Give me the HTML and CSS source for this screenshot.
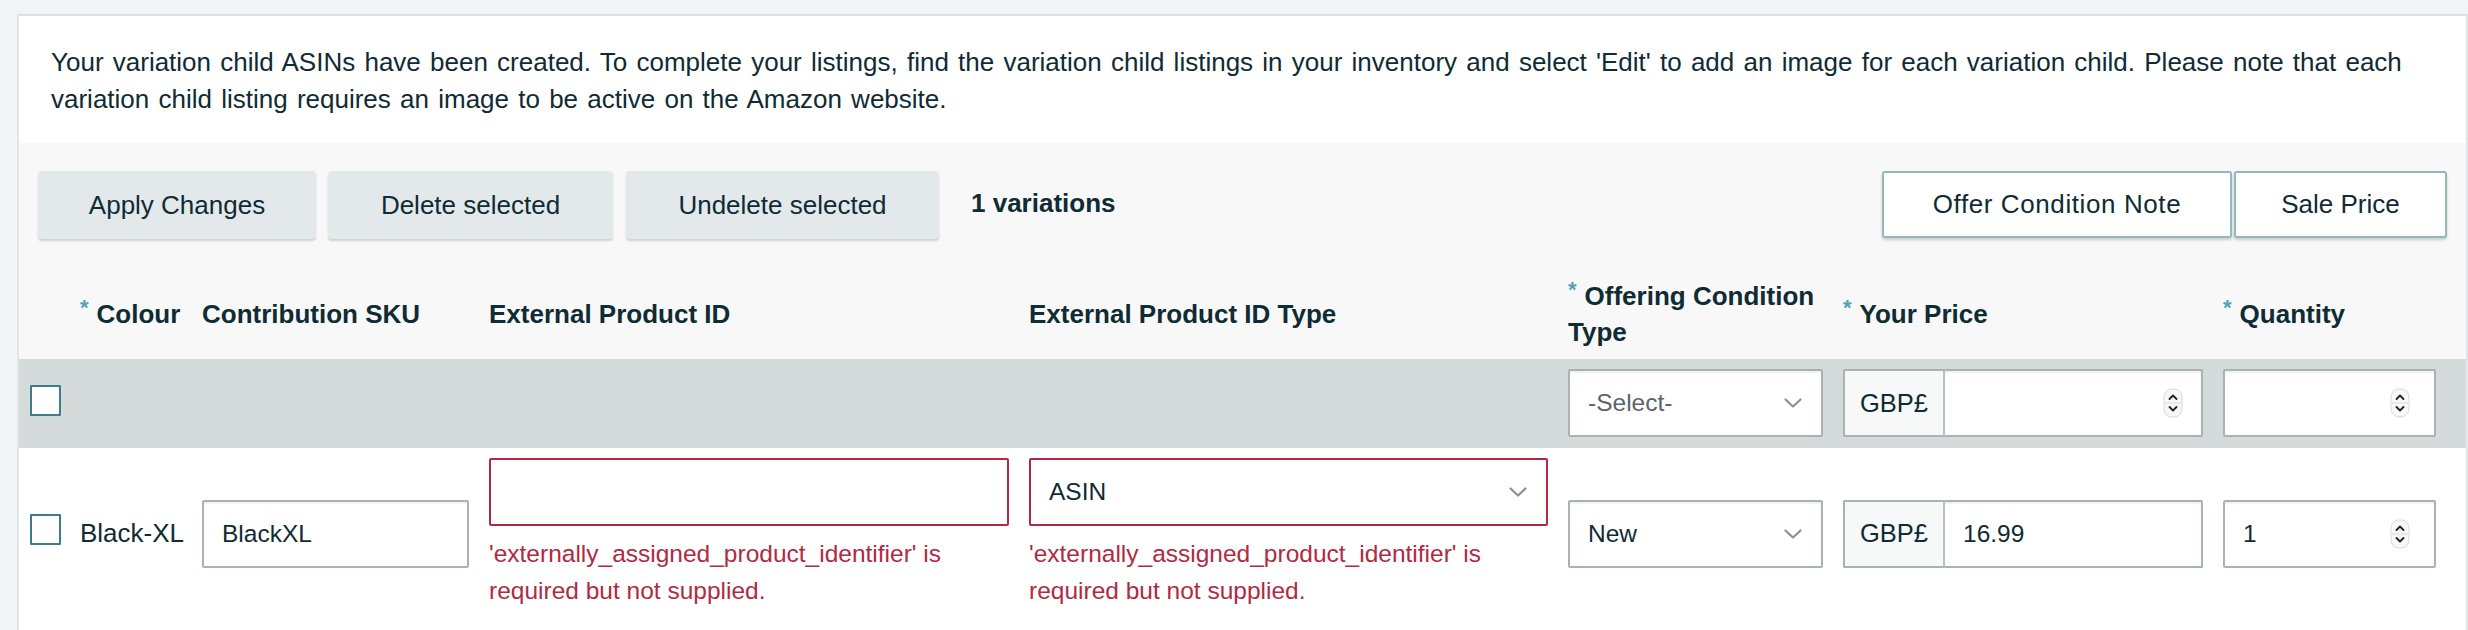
FILE: index.html
```html
<!DOCTYPE html>
<html lang="en">
<head>
<meta charset="utf-8">
<title>Variations</title>
<link rel="stylesheet" href="styles.css">
</head>
<body>
<div class="page">
  <div class="panel">
    <div class="notice">
      <p>Your variation child ASINs have been created. To complete your listings, find the variation child listings in your inventory and select 'Edit' to add an image for each variation child. Please note that each variation child listing requires an image to be active on the Amazon website.</p>
    </div>

    <div class="toolbar">
      <div class="actions">
        <button class="btn btn-apply">Apply Changes</button>
        <button class="btn btn-delete">Delete selected</button>
        <button class="btn btn-undelete">Undelete selected</button>
        <span class="count">1 variations</span>
      </div>
      <div class="toggles">
        <button class="toggle toggle-note">Offer Condition Note</button>
        <button class="toggle toggle-sale">Sale Price</button>
      </div>
    </div>

    <div class="grid head">
      <div></div>
      <div class="th"><span class="req">*</span>Colour</div>
      <div class="th">Contribution SKU</div>
      <div class="th">External Product ID</div>
      <div class="th">External Product ID Type</div>
      <div class="th"><span class="req">*</span>Offering Condition Type</div>
      <div class="th"><span class="req">*</span>Your Price</div>
      <div class="th"><span class="req">*</span>Quantity</div>
    </div>

    <div class="grid bulk">
      <div><span class="check"></span></div>
      <div></div>
      <div></div>
      <div></div>
      <div></div>
      <div class="field select placeholder">-Select-<svg class="chev" width="20" height="12" viewBox="0 0 20 12"><path d="M2.5 2.5 L10 9.5 L17.5 2.5" fill="none" stroke="#8d9191" stroke-width="2.2" stroke-linecap="round" stroke-linejoin="round"/></svg></div>
      <div class="money">
        <span class="prefix">GBP£</span>
        <span class="field num"><span class="val"></span><svg class="spin" width="20" height="30" viewBox="0 0 20 30"><rect x="1" y="1" width="18" height="28" rx="8" fill="#f7f7f7" stroke="#dadada"/><line x1="2" y1="15" x2="18" y2="15" stroke="#dcdcdc"/><path d="M6.5 11 L10 7.5 L13.5 11" fill="none" stroke="#222" stroke-width="1.8" stroke-linecap="round" stroke-linejoin="round"/><path d="M6.5 19 L10 22.5 L13.5 19" fill="none" stroke="#222" stroke-width="1.8" stroke-linecap="round" stroke-linejoin="round"/></svg></span>
      </div>
      <div class="field num"><span class="val"></span><svg class="spin" width="20" height="30" viewBox="0 0 20 30"><rect x="1" y="1" width="18" height="28" rx="8" fill="#f7f7f7" stroke="#dadada"/><line x1="2" y1="15" x2="18" y2="15" stroke="#dcdcdc"/><path d="M6.5 11 L10 7.5 L13.5 11" fill="none" stroke="#222" stroke-width="1.8" stroke-linecap="round" stroke-linejoin="round"/><path d="M6.5 19 L10 22.5 L13.5 19" fill="none" stroke="#222" stroke-width="1.8" stroke-linecap="round" stroke-linejoin="round"/></svg></div>
    </div>

    <div class="grid row">
      <div><span class="check"></span></div>
      <div class="cell-text">Black-XL</div>
      <div class="field">BlackXL</div>
      <div class="stack">
        <div class="field error"></div>
        <div class="err-msg">'externally_assigned_product_identifier' is required but not supplied.</div>
      </div>
      <div class="stack">
        <div class="field select error">ASIN<svg class="chev" width="20" height="12" viewBox="0 0 20 12"><path d="M2.5 2.5 L10 9.5 L17.5 2.5" fill="none" stroke="#8d9191" stroke-width="2.2" stroke-linecap="round" stroke-linejoin="round"/></svg></div>
        <div class="err-msg">'externally_assigned_product_identifier' is required but not supplied.</div>
      </div>
      <div class="field select">New<svg class="chev" width="20" height="12" viewBox="0 0 20 12"><path d="M2.5 2.5 L10 9.5 L17.5 2.5" fill="none" stroke="#8d9191" stroke-width="2.2" stroke-linecap="round" stroke-linejoin="round"/></svg></div>
      <div class="money">
        <span class="prefix">GBP£</span>
        <span class="field num"><span class="val">16.99</span></span>
      </div>
      <div class="field num"><span class="val">1</span><svg class="spin" width="20" height="30" viewBox="0 0 20 30"><rect x="1" y="1" width="18" height="28" rx="8" fill="#f7f7f7" stroke="#dadada"/><line x1="2" y1="15" x2="18" y2="15" stroke="#dcdcdc"/><path d="M6.5 11 L10 7.5 L13.5 11" fill="none" stroke="#222" stroke-width="1.8" stroke-linecap="round" stroke-linejoin="round"/><path d="M6.5 19 L10 22.5 L13.5 19" fill="none" stroke="#222" stroke-width="1.8" stroke-linecap="round" stroke-linejoin="round"/></svg></div>
    </div>
  </div>
</div>
</body>
</html>
```

FILE: styles.css
```css
* { box-sizing: border-box; }

html, body {
  margin: 0;
  padding: 0;
  background: #f2f5f6;
  font-family: "Liberation Sans", Arial, sans-serif;
  font-size: 26px;
  color: #0f2b33;
}

.page {
  padding: 14px 0 0 17px;
  min-height: 630px;
}

.panel {
  border-top: 2px solid #dcdfe0;
  border-left: 2px solid #e2e5e6;
  border-right: 2px solid #e2e5e6;
  background: #ffffff;
  min-height: 616px;
}

.notice {
  background: #ffffff;
  padding: 28px 36px 25px 32px;
}
.notice p {
  margin: 0;
  line-height: 37px;
  word-spacing: 2px;
}

.toolbar {
  background: #f8f8f8;
  padding: 28px 19px 30px 19px;
  display: flex;
  justify-content: space-between;
  align-items: flex-start;
}

.actions {
  display: flex;
  align-items: center;
  gap: 12px;
}

.btn {
  font: inherit;
  color: #0f2b33;
  height: 68px;
  border: none;
  border-radius: 4px;
  background: #e3e9eb;
  box-shadow: 0 2px 2px rgba(0, 0, 0, 0.16);
  padding: 0;
}
.btn-apply { width: 278px; }
.btn-delete { width: 285px; }
.btn-undelete { width: 313px; margin-left: 1px; }

.count {
  font-weight: bold;
  margin-left: 20px;
  margin-top: -4px;
}

.toggles {
  display: flex;
  gap: 2px;
}
.toggle {
  font: inherit;
  color: #0f2b33;
  height: 67px;
  background: #ffffff;
  border: 2px solid #93b9bb;
  border-radius: 3px;
  box-shadow: 0 2px 3px rgba(0, 0, 0, 0.18);
  padding: 0;
}
.toggle-note { width: 350px; letter-spacing: 0.6px; }
.toggle-sale { width: 213px; }

.grid {
  display: grid;
  grid-template-columns: 30px 102px 267px 520px 519px 255px 360px 213px;
  column-gap: 20px;
  align-items: center;
  padding-left: 11px;
}

.head {
  background: #f8f8f8;
  padding-top: 9px;
  padding-bottom: 9px;
  min-height: 90px;
}
.th {
  font-weight: bold;
  line-height: 36px;
}
.req {
  display: inline-block;
  color: #52a3b4;
  font-size: 22px;
  line-height: 24px;
  vertical-align: top;
  margin-right: 8px;
}

.bulk {
  background: #d5dbdb;
  padding-top: 10px;
  padding-bottom: 11px;
}

.row {
  background: #ffffff;
  padding-top: 10px;
  padding-bottom: 10px;
}

.check {
  display: block;
  width: 31px;
  height: 31px;
  background: #ffffff;
  border: 2px solid #3c7d8c;
  border-radius: 1px;
  margin-top: -6px;
}
.row .check { margin-top: -8px; }

.cell-text {
  white-space: nowrap;
}

.field {
  height: 68px;
  background: #ffffff;
  border: 2px solid #a9b3b4;
  border-radius: 2px;
  box-shadow: inset 0 2px 2px rgba(0, 0, 0, 0.06);
  display: flex;
  align-items: center;
  padding: 0 18px;
  white-space: nowrap;
  font-size: 24.5px;
}
.field.error {
  border-color: #b12a3f;
  box-shadow: none;
}
.select {
  justify-content: space-between;
  padding-right: 18px;
}
.placeholder { color: #5b6466; }

.num {
  justify-content: space-between;
  padding-right: 24px;
}
.money .num { padding-right: 18px; }

.money {
  display: flex;
  height: 68px;
}
.prefix {
  width: 102px;
  flex: none;
  display: flex;
  align-items: center;
  justify-content: center;
  background: #f7f8f8;
  border: 2px solid #a9b3b4;
  border-right: 2px solid #b8c0c1;
  border-radius: 2px 0 0 2px;
  font-size: 25.5px;
}
.money .field {
  flex: 1;
  border-left: none;
  border-radius: 0 2px 2px 0;
}

.stack {
  display: flex;
  flex-direction: column;
}
.err-msg {
  color: #b12a3f;
  font-size: 24.5px;
  line-height: 37px;
  margin-top: 9px;
  padding-right: 40px;
}
```
